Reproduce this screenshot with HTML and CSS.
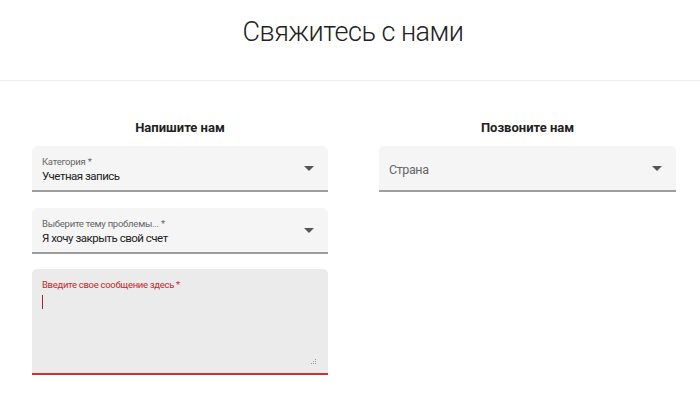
FILE: index.html
```html
<!DOCTYPE html>
<html lang="ru">
<head>
<meta charset="utf-8">
<link rel="stylesheet" href="styles.css">
</head>
<body>
<header class="top">
  <h1 class="title">Свяжитесь с нами</h1>
</header>
<main class="cols">
  <section class="col">
    <h2 class="col-title">Напишите нам</h2>
    <div class="field">
      <div class="field-text">
        <span class="label">Категория *</span>
        <span class="value">Учетная запись</span>
      </div>
      <span class="arrow"></span>
    </div>
    <div class="field">
      <div class="field-text">
        <span class="label">Выберите тему проблемы... *</span>
        <span class="value">Я хочу закрыть свой счет</span>
      </div>
      <span class="arrow"></span>
    </div>
    <div class="area">
      <span class="area-label">Введите свое сообщение здесь *</span>
      <span class="caret"></span>
      <svg class="grip" width="7" height="7" viewBox="0 0 7 7">
        <rect x="5" y="0" width="1" height="1" fill="#999"/>
        <rect x="3" y="2" width="1" height="1" fill="#999"/>
        <rect x="5" y="2" width="1" height="1" fill="#999"/>
        <rect x="1" y="4" width="1" height="1" fill="#999"/>
        <rect x="3" y="4" width="1" height="1" fill="#999"/>
        <rect x="5" y="4" width="1" height="1" fill="#999"/>
      </svg>
    </div>
  </section>
  <section class="col">
    <h2 class="col-title">Позвоните нам</h2>
    <div class="field">
      <div class="field-text">
        <span class="placeholder">Страна</span>
      </div>
      <span class="arrow"></span>
    </div>
  </section>
</main>
</body>
</html>
```
FILE: styles.css
```css
* { box-sizing: border-box; }
body {
  margin: 0;
  background: #fff;
  font-family: Roboto, "Noto Sans", sans-serif;
  color: #222;
}
.top {
  height: 81px;
  border-bottom: 1px solid #f0f0f0;
  display: flex;
  justify-content: center;
  padding-top: 12px;
}
.title {
  margin: 0;
  font-size: 27px;
  font-weight: 300;
  letter-spacing: -0.5px;
  line-height: 40px;
  color: #222;
  padding-left: 6px;
}
.cols {
  display: grid;
  grid-template-columns: 296px 297px;
  column-gap: 51px;
  padding-left: 32px;
}
.col {
  display: flex;
  flex-direction: column;
}
.col-title {
  margin: 36px 0 7px;
  text-align: center;
  font-size: 13px;
  font-weight: 700;
  line-height: 22px;
  color: #222;
}
.field {
  height: 46px;
  background: #f5f5f5;
  border-radius: 5px 5px 0 0;
  border-bottom: 2px solid #9e9e9e;
  display: flex;
  align-items: center;
  padding: 0 14px 0 10px;
  margin-bottom: 16px;
}
.field-text {
  flex: 1;
  display: flex;
  flex-direction: column;
  padding-top: 4px;
}
.label {
  font-size: 9.5px;
  letter-spacing: -0.25px;
  color: #666;
  line-height: 12px;
}
.value {
  font-size: 11.5px;
  letter-spacing: -0.5px;
  color: #222;
  line-height: 16px;
}
.placeholder {
  font-size: 12.5px;
  letter-spacing: -0.4px;
  color: #666;
  line-height: 16px;
}
.arrow {
  width: 0;
  height: 0;
  border-left: 5px solid transparent;
  border-right: 5px solid transparent;
  border-top: 5px solid #555;
}
.area {
  position: relative;
  height: 106px;
  margin-top: -1px;
  background: #ebebeb;
  border-radius: 5px 5px 0 0;
  border-bottom: 2px solid #d32f2f;
  padding: 10px 10px;
  display: flex;
  flex-direction: column;
}
.area-label {
  font-size: 9.5px;
  letter-spacing: -0.3px;
  color: #c62828;
  line-height: 12px;
}
.caret {
  width: 1px;
  height: 14px;
  margin-top: 4px;
  background: #8a3030;
}
.grip {
  position: absolute;
  right: 11px;
  bottom: 7px;
}
```
